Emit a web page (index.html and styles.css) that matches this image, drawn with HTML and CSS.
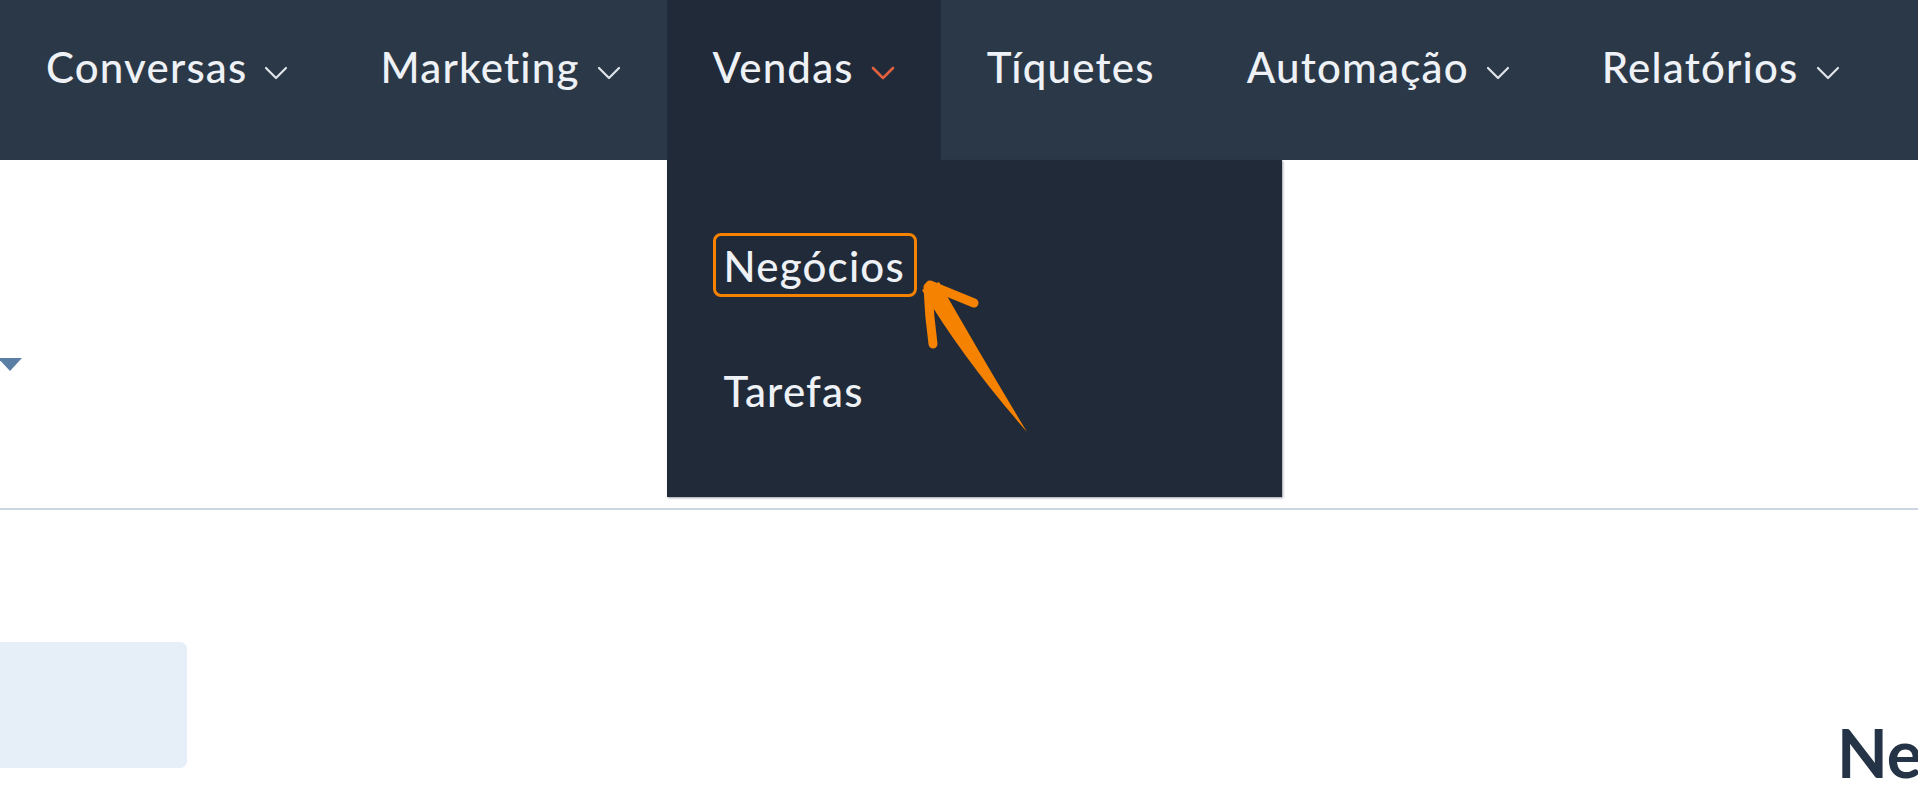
FILE: index.html
```html
<!DOCTYPE html>
<html lang="pt-BR">
<head>
<meta charset="utf-8">
<title>Vendas - Negócios</title>
<link rel="stylesheet" href="styles.css">
</head>
<body>
<header class="topnav">
  <nav class="menu">
    <div class="menu-item">
      <span class="label">Conversas</span>
      <svg class="chev" viewBox="0 0 24 14" width="24" height="14"><path d="M2 2 L12 12 L22 2"/></svg>
    </div>
    <div class="menu-item">
      <span class="label">Marketing</span>
      <svg class="chev" viewBox="0 0 24 14" width="24" height="14"><path d="M2 2 L12 12 L22 2"/></svg>
    </div>
    <div class="menu-item active">
      <span class="label">Vendas</span>
      <svg class="chev chev-active" viewBox="0 0 24 14" width="24" height="14"><path d="M2 2 L12 12 L22 2"/></svg>
      <div class="dropdown">
        <a class="drop-link"><span class="highlight">Negócios</span></a>
        <a class="drop-link">Tarefas</a>
        <svg class="annot-arrow" viewBox="0 0 140 170" width="140" height="170">
          <path class="arrow-fill" d="M20 20 Q 62 90 125 162 Q 78 84 37 12 Z"/>
          <path class="arrow-stroke" d="M26 17 Q 27 45 31 74"/>
          <path class="arrow-stroke" d="M28 15 L72 33"/>
        </svg>
      </div>
    </div>
    <div class="menu-item">
      <span class="label">Tíquetes</span>
    </div>
    <div class="menu-item">
      <span class="label">Automação</span>
      <svg class="chev" viewBox="0 0 24 14" width="24" height="14"><path d="M2 2 L12 12 L22 2"/></svg>
    </div>
    <div class="menu-item">
      <span class="label">Relatórios</span>
      <svg class="chev" viewBox="0 0 24 14" width="24" height="14"><path d="M2 2 L12 12 L22 2"/></svg>
    </div>
  </nav>
</header>
<main class="page">
  <section class="toolbar">
    <span class="caret"></span>
  </section>
  <section class="content">
    <div class="filter-box"></div>
    <h1 class="page-title">Negócios</h1>
  </section>
</main>
</body>
</html>
```
FILE: styles.css
```css
html, body {
  margin: 0;
  padding: 0;
}
body {
  width: 1918px;
  height: 786px;
  overflow: hidden;
  background: #ffffff;
  font-family: Lato, "Noto Sans", "Liberation Sans", sans-serif;
}
.topnav {
  height: 160px;
  background: #2a3847;
}
.menu {
  display: flex;
  height: 160px;
}
.menu-item {
  position: relative;
  display: flex;
  align-items: flex-start;
  padding: 42px 46px 0 46px;
  height: 160px;
  box-sizing: border-box;
  color: #eef1f5;
  font-size: 42px;
  font-weight: 500;
  line-height: 50px;
  letter-spacing: 1.2px;
}
.menu-item.active {
  background: #212a38;
}
.chev {
  margin-left: 17px;
  margin-top: 24px;
  width: 24px;
  height: 14px;
  fill: none;
  stroke: #dfe4ea;
  stroke-width: 2.2;
  stroke-linecap: round;
  stroke-linejoin: round;
}
.chev-active {
  stroke: #e3603f;
  stroke-width: 2.6;
}
.dropdown {
  position: absolute;
  top: 160px;
  left: 0;
  width: 615px;
  box-sizing: border-box;
  padding: 81px 0 81px 57px;
  display: flex;
  flex-direction: column;
  align-items: flex-start;
  gap: 75px;
  background: #212a38;
  box-shadow: 1px 1px 2px rgba(30, 40, 55, 0.45);
  z-index: 5;
}
.drop-link {
  display: block;
  color: #eef1f5;
  font-size: 42px;
  font-weight: 500;
  line-height: 50px;
  letter-spacing: 1.2px;
}
.highlight {
  position: relative;
  display: inline-block;
}
.highlight::after {
  content: "";
  position: absolute;
  top: -8px;
  bottom: -6px;
  left: -11px;
  right: -12px;
  border: 3px solid #f58200;
  border-radius: 8px;
}
.annot-arrow {
  position: absolute;
  left: 235px;
  top: 110px;
  overflow: visible;
}
.arrow-fill {
  fill: #f58200;
}
.arrow-stroke {
  fill: none;
  stroke: #f58200;
  stroke-width: 9;
  stroke-linecap: round;
  stroke-linejoin: round;
}
.toolbar {
  height: 350px;
  box-sizing: border-box;
  padding-top: 198px;
  border-bottom: 2px solid #cbd6e2;
}
.caret {
  display: block;
  width: 0;
  height: 0;
  margin-left: -2px;
  border-left: 12px solid transparent;
  border-right: 12px solid transparent;
  border-top: 13px solid #5b7ea4;
}
.content {
  display: flex;
  align-items: flex-start;
  padding-top: 132px;
}
.filter-box {
  flex-shrink: 0;
  width: 197px;
  height: 126px;
  margin-left: -10px;
  background: #e6eef7;
  border-radius: 7px;
}
.page-title {
  flex-shrink: 0;
  margin: 71px 0 0 1650px;
  font-size: 66px;
  font-weight: 700;
  line-height: normal;
  color: #243446;
  white-space: nowrap;
}
```
